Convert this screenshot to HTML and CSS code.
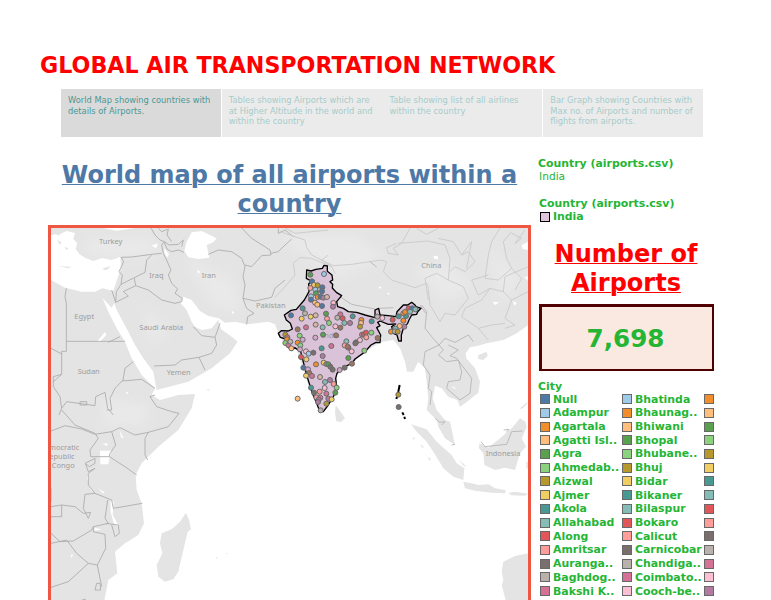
FILE: index.html
```html
<!DOCTYPE html>
<html lang="en">
<head>
<meta charset="utf-8">
<title>Global Air Transportation Network</title>
<link rel="stylesheet" href="styles.css">
</head>
<body>
<h1 class="title">GLOBAL AIR TRANSPORTATION NETWORK</h1>
<nav class="story">
  <div class="tab active">World Map showing countries with details of Airports.</div>
  <div class="tab">Tables showing Airports which are at Higher Altitude in the world and within the country</div>
  <div class="tab joined">Table showing list of all airlines within the country</div>
  <div class="tab">Bar Graph showing Countries with Max no. of Airports and number of flights from airports.</div>
</nav>
<main class="board">
  <section class="map-col">
    <h2 class="map-title">World map of all airports within a country</h2>
    <div class="map">
      <svg width="477" height="376" viewBox="18 9 1431 1128">
        <defs><filter id="soft"><feGaussianBlur stdDeviation="1.6"/></filter><filter id="relief" x="-20%" y="-20%" width="140%" height="140%"><feGaussianBlur stdDeviation="18"/></filter></defs>
        <g class="land" filter="url(#soft)">
          <path d="M18 0H1450V300L1415 325 1375 345 1325 355 1300 362 1275 367 1262 385 1264 400 1290 430 1305 470 1300 503 1266 530 1245 545 1237 525 1210 515 1190 490 1170 482 1163 520 1175 555 1200 585 1215 590 1230 660 1200 640 1180 605 1175 585 1145 555 1150 520 1145 470 1140 430 1120 410 1105 440 1086 440 1080 410 1065 370 1045 345 1005 352 960 382 910 425 875 450 875 490 865 520 830 560 815 530 790 480 770 420 755 375 725 370 700 325 690 298 670 290 605 298 570 290 540 293 522 280 490 273 465 258 440 225 415 215 407 235 425 255 440 290 450 305 470 315 500 310 520 285 528 312 560 335 578 350 555 385 500 430 430 470 335 495 325 440 295 400 270 360 250 320 215 255 208 235 200 248 172 218 190 260 215 310 240 350 260 400 290 450 330 490 320 510 345 525 400 510 450 507 440 550 400 615 340 665 290 715 272 750 275 795 290 835 297 895 280 930 240 955 210 980 217 1045 190 1065 176 1137H18Z"/>
          <path d="M423 863L432 885 438 913 428 920 415 975 400 1040 385 1063 360 1070 340 1055 335 1020 352 985 345 955 350 925 380 913 405 890Z"/>
          <path d="M872 540L890 565 900 580 888 591 874 589 870 565Z"/>
          <path d="M1098 598L1145 613 1175 650 1220 690 1235 715 1258 730 1255 765 1225 755 1195 730 1165 680 1145 650 1115 620Z"/>
          <path d="M1255 770L1280 775 1300 780 1330 778 1350 790 1382 796 1380 805 1340 803 1290 797 1260 790ZM1390 804L1410 800 1450 806 1440 812 1400 811Z"/>
          <path d="M1303 655L1330 668 1365 640 1400 610 1425 580 1441 590 1445 606 1430 640 1443 665 1425 685 1410 735 1380 728 1350 735 1318 720 1315 685 1302 670Z"/>
          <path d="M1450 985L1410 993 1375 1010 1370 1040 1375 1065 1370 1080 1385 1137H1450Z"/>
          <path d="M1300 390L1325 380 1328 392 1315 405 1299 402ZM1107 635L1110 643 1102 643ZM1125 657L1136 665 1132 670ZM1148 695L1158 702 1153 707ZM1240 702L1265 725 1256 723ZM1444 710L1450 712V733L1444 728ZM512 998L518 996V1000L512 1001ZM542 985L548 984V988ZM484 493L496 494 490 497ZM1425 550L1448 530 1446 538 1430 552Z"/>
        </g>
        <g class="relief" filter="url(#relief)"><path d="M120 40H330V95H120ZM420 100L560 160 590 260 500 240ZM700 30H930L1020 100 880 160 750 70ZM1100 130L1220 110 1280 190 1200 230ZM170 520L310 540 300 600 180 600ZM300 240L370 320 310 360ZM1320 60L1430 160 1370 230Z"/></g>
        <g class="sea" filter="url(#soft)">
          <path d="M18 30L50 25 65 18 90 24 85 42 97 55 92 72 104 88 120 98 145 108 172 99 200 105 226 95 228 130 214 170 205 198 172 190 150 200 110 200 60 188 18 165Z"/>
          <path d="M175 9L215 17 270 9ZM425 50L440 22 470 18 495 30 515 40 505 52 485 60 493 98 460 102 430 97 418 78ZM358 70L372 88 366 98 358 84ZM320 62L338 55 334 70ZM455 135L466 140 460 146ZM560 258L568 262 563 267Z"/>
          <path d="M165 677L200 677 195 692 190 718 166 718ZM172 656L188 655 186 663ZM196 827L206 830 203 870 217 895 220 905 206 895 197 860ZM133 745L130 775 145 800 138 795 126 760ZM160 790L180 803 173 805ZM224 617L236 640 228 637ZM148 908L170 913 150 917ZM156 350L180 320 184 330 165 350ZM77 990L83 987 81 1000ZM242 500L251 503 245 508Z"/>
          <path d="M1430 60L1450 50V75L1433 72ZM1165 92L1178 94 1180 103 1168 101ZM1000 184L1010 187 1004 192ZM1026 203L1037 206 1028 209ZM1343 230L1362 232 1350 240ZM1404 227L1416 235 1408 242ZM1221 482L1235 492 1225 490ZM1438 157L1450 153V168Z"/>
        </g>
        <path class="isle" d="M172 131L196 123 190 132 180 136ZM40 124L80 125 70 130ZM36 45L50 52 45 60ZM25 20L50 24 40 32ZM58 65L70 70 65 76Z"/>
        <g class="borders">
          <path d="M228 97L260 96 290 92 320 88 350 85M228 97L236 110 222 140 232 150 228 178M228 178L300 142 305 105 320 90M200 195L212 232 214 200 228 178M212 232L250 213 235 200 272 182 268 160M272 182L310 195 350 225 390 235 410 230 412 220 390 205 398 192 380 175 370 150 378 135 366 108 355 85 350 60 358 50"/>
          <path d="M318 9L330 30 345 45 358 50 372 60 400 58 415 45 410 65M340 10L350 20 370 12 366 30 380 50M358 52L366 72 380 80 400 75 417 82M490 88L520 75 560 80 590 100 600 125 594 155 600 180 594 220 605 250 627 265 608 275 605 298M590 9L620 40 675 75 678 90 650 92 620 125 600 120M594 220L630 228 680 217 690 190 720 165M678 85L700 80 720 60 740 42M700 10V25L720 15 745 35"/>
          <path d="M64 190L60 215 64 235V349H240M64 349V379H50V448L25 455 25 485 45 515 50 550 42 570M18 370L50 387M50 448L25 470M190 352L225 335M445 305L470 332 510 337 525 295M510 337L515 360 500 385 462 397 480 435M462 397L410 405 390 420 327 423M265 410L240 430 234 465M232 468L290 463 330 490M330 510L315 515 335 545 380 560 402 565M234 465L210 490 195 520 200 555 185 555M50 550L65 530 150 542 152 515 180 502 188 550 205 570M105 530H125V540H105Z"/>
          <path d="M50 555L90 600 150 625 160 640 135 675 137 695H193L195 685 212 660 200 620 150 628 110 612 60 602 18 618M200 620L225 608 270 630 310 622 370 605 402 565M310 622L300 640V690L308 705M193 695L240 725 275 750M120 715L150 700V715L133 725ZM122 717L130 740 150 730 130 745 130 780 150 805M150 805L120 808 115 850 130 880 137 862 115 865 90 845 50 840 18 845M18 875H50V840M150 805L200 825 205 850 292 835M188 825L180 880 190 895 145 905V920L180 928 182 970 157 1020 165 1060 170 1085M182 895L220 900 223 925 210 935 200 900M18 925L45 950 85 948 140 915 145 905M18 955L65 945 95 985 130 1015 70 1070 18 1087M130 1015L157 1020M155 1075L165 1075 167 1095 150 1095ZM100 1130L120 1122 130 1137M18 790V830"/>
        </g>
        <g class="borders faint">
          <path d="M705 20L780 45 785 68 800 90 865 122 920 118 1010 105M720 9L750 25 850 15M690 217L720 185 750 150 745 115 765 98 800 100 860 125 870 145M860 125L830 105 850 90"/>
          <path d="M1008 105L1025 110 1015 140 1040 165 1110 188 1145 175 1150 188M1055 55L1025 68 1030 85 1060 90 1045 70 1070 55 1095 10M1060 55L1150 48 1200 60 1215 100 1210 165 1175 145 1140 160 1150 225M1115 10L1145 28 1180 10M1180 40L1225 50 1250 90 1270 80 1290 110 1260 140 1230 125 1215 140M1250 90L1280 50 1265 130M1210 165L1255 185 1270 220 1230 270 1200 265 1185 290 1155 240 1150 190"/>
          <path d="M1365 9L1340 50 1330 90 1320 160 1360 165 1400 130 1385 100 1375 50 1400 20M1330 150L1280 165 1300 210 1335 190 1310 225 1260 250 1250 275 1300 310 1330 345M1335 190L1375 200 1380 155 1450 125M1375 200L1400 225 1380 280 1410 300 1380 310M1400 225L1450 200M1400 130L1430 160 1410 195M1400 25L1430 40 1410 55 1440 15M1300 310L1340 300 1380 295"/>
          <path class="dark" d="M1130 240L1145 260 1140 310 1160 335 1182 360 1200 340 1230 352 1270 330 1285 350M1182 360L1140 380 1135 420 1155 450 1150 490 1160 500 1155 540M1182 360L1195 375 1180 390 1205 410 1240 405 1250 440 1245 465 1210 470 1205 490 1245 525 1275 505 1280 460 1235 400 1215 392 1240 375 1210 360"/>
          <path class="dark" d="M1170 580L1185 592 1200 590 1190 600M1220 660L1230 658M1308 650L1320 665 1385 658 1400 620 1432 618M1376 615L1392 613 1384 622"/>
        </g>
        <g transform="translate(660 90)">
          <path class="himal" d="M220 122L260 148 330 162M345 160L385 158M315 20L335 36M465 150L482 175"/>
          <g class="india">
            <path d="M125 45L138 48 153 43 172 40 177 31 187 33 187 49 201 60 203 75 195 80 203 88 202 99 214 112 230 122 215 140 218 155 235 160 250 170 275 172 300 180 330 188 330 165 341 160 345 180 370 182 393 185 396 170 415 150 428 150 440 142 450 150 453 155 468 160 458 170 455 178 440 180 432 195 428 205 415 220 409 240 409 258 401 258 396 240 385 235 380 215 392 207 370 208 345 198 338 202 345 212 335 218 347 240 345 263 333 262 318 270 298 292 270 312 261 325 237 336 216 355 212 370 216 402 205 425 190 450 175 470 165 470 153 440 142 415 125 360 107 290 99 285 90 278 79 285 60 267 62 252 46 247 40 235 49 227 70 228 82 222 76 205 64 195 58 180 78 166 94 163 118 135 132 110 131 87 138 78 124 70Z"/>
            <path d="M404 390L400 410 397 420M396 425L394 432M412 472L416 480M418 485L420 492"/>
          </g>
        </g>
        <g class="labels">
          <text x="162" y="56">Turkey</text><text x="313" y="158">Iraq</text><text x="470" y="160">Iran</text><text x="633" y="250">Pakistan</text><text x="88" y="283">Egypt</text><text x="283" y="315">Saudi Arabia</text><text x="98" y="447">Sudan</text><text x="365" y="450">Yemen</text><text x="1129" y="128">China</text><text x="1322" y="692">Indonesia</text><text x="830" y="338">India</text><text x="103" y="675" text-anchor="end">Democratic</text><text x="89" y="703" text-anchor="end">Republic</text><text x="89" y="729" text-anchor="end">of Congo</text>
        </g>
        <g id="airports" class="airports" transform="translate(660 90)"></g>
      </svg>
    </div>
  </section>
  <aside class="side">
    <div class="filter"><b>Country (airports.csv)</b><span>India</span></div>
    <div class="key"><b>Country (airports.csv)</b><div class="item"><i class="swatch pink"></i>India</div></div>
    <h2 class="count-title">Number of Airports</h2>
    <div class="count">7,698</div>
    <div class="city">City</div>
    <div class="legend" id="legend"></div>
  </aside>
</main>
<script src="app.js"></script>
</body>
</html>
```
FILE: styles.css
```css
* { box-sizing: border-box; }
html, body { height: 600px; overflow: hidden; }
body { margin: 0; background: #fff; font-family: "DejaVu Sans", sans-serif; display: flex; flex-direction: column; }
.title { margin: 51px 0 0 40px; height: 38px; font-size: 22.18px; line-height: 28px; color: #f00; white-space: nowrap; }
.story { display: flex; gap: 1px; margin-left: 61px; width: 642px; height: 48px; flex: none; }
.tab { width: 160px; padding: 6px 5px 0 7px; background: #ebebeb; color: #a5cbca; font-size: 8.3px; line-height: 10.5px; }
.tab.active { background: #dadada; color: #499894; }
.tab.joined { margin-left: -1px; width: 161px; padding-left: 8px; }
.board { display: flex; margin-left: 48px; flex: 1; min-height: 0; }
.map-col { width: 483px; }
h2 { font-size: 24px; line-height: 29px; text-align: center; text-decoration: underline; text-decoration-thickness: 1px; }
.map-title { margin: 24px 0 6px; color: #4e79a7; }
.map { width: 483px; height: 382px; border: 3px solid #f05742; background: #fff; }
.map svg { display: block; }
.land { fill: #e4e4e4; }
.relief { fill: #ededed; opacity: .6; }
.sea { fill: #fff; }
.isle { fill: #e4e4e4; }
.borders { fill: none; stroke: #acacac; stroke-width: 2.6; stroke-linejoin: round; }
.faint { stroke: #c9c9c9; }
.faint .dark { stroke: #b4b4b4; }
.himal { fill: none; stroke: #bbb; stroke-width: 3; }
.india { fill: #dac3d8; stroke: #000; stroke-width: 4; stroke-linejoin: round; }
.india path + path { fill: none; stroke-width: 6; }
.labels { font-family: "Noto Sans", sans-serif; font-size: 22.4px; fill: #9c9c9c; }
.airports { stroke: #6b6b6b; stroke-width: 3; }
.side { width: 176px; margin-left: 7px; color: #24b534; font-size: 10.9px; }
.filter, .key { display: flex; flex-direction: column; line-height: 13px; white-space: nowrap; }
.filter { margin-top: 20px; height: 40px; }
.filter span { margin-left: 1px; font-size: 10.67px; }
.key { height: 27px; }
.key b { margin-left: 1px; }
.item { display: flex; align-items: center; font-weight: bold; white-space: nowrap; }
.swatch { flex: none; width: 10px; height: 10px; margin: 0 3px 0 2px; border: 1px solid #686868; }
.swatch.pink { background: #dfc5dc; border-color: #000; }
.count-title { margin: 16px 0 6px; color: #f00; }
.count { width: 175px; height: 67px; margin-left: 1px; padding-right: 3px; border: 2px solid #500000; border-top-width: 3px; border-left-width: 3px; background: #fae9e0; font-size: 24.6px; font-weight: bold; line-height: 63px; text-align: center; }
.city { margin: 9px 0 0; font-weight: bold; line-height: 13px; }
.legend { display: grid; grid-template-columns: 82px 82px 12px; grid-auto-rows: 13.72px; margin-top: -0.8px; }
```
FILE: app.js
```js
const palette = ['#4e79a7','#a0cbe8','#f28e2b','#ffbe7d','#59a14f','#8cd17d','#b6992d','#f1ce63','#499894','#86bcb6','#e15759','#ff9d9a','#79706e','#bab0ac','#d37295','#fabfd2','#b07aa1','#d4a6c8','#9d7660','#d7b5a6'];

// Each row: first-column city, second-column city
const rows = [['Null','Bhatinda'],['Adampur','Bhaunag..'],['Agartala','Bhiwani'],['Agatti Isl..','Bhopal'],['Agra','Bhubane..'],['Ahmedab..','Bhuj'],['Aizwal','Bidar'],['Ajmer','Bikaner'],['Akola','Bilaspur'],['Allahabad','Bokaro'],['Along','Calicut'],['Amritsar','Carnicobar'],['Auranga..','Chandiga..'],['Baghdog..','Coimbato..'],['Bakshi K..','Cooch-be..'],['Bangalore','Cuddapah']];
const legend = document.getElementById('legend');
rows.forEach((row, r) => [row[0], row[1], ''].forEach((name, c) => {
  const item = document.createElement('div');
  const swatch = document.createElement('i');
  item.className = 'item';
  swatch.className = 'swatch';
  swatch.style.background = palette[(r + c) % 20];
  item.append(swatch, name);
  legend.append(item);
}));

// Airports as x, y, palette index
const airports = [[136,59,4],[177,57,1],[141,79,0],[147,90,7],[158,91,6],[136,99,11],[151,104,1],[165,103,13],[172,97,0],[171,109,0],[153,115,4],[138,124,1],[158,126,2],[167,125,0],[175,128,16],[186,126,19],[138,134,0],[150,143,3],[157,149,3],[171,153,0],[205,144,15],[204,155,16],[113,160,8],[120,175,13],[78,181,0],[110,191,7],[137,185,7],[152,181,19],[183,176,4],[186,191,11],[192,204,5],[226,178,14],[217,188,13],[233,190,10],[238,204,9],[263,184,8],[289,195,2],[288,204,3],[285,215,6],[320,199,8],[255,204,16],[98,223,18],[123,217,14],[152,209,19],[173,217,9],[211,214,15],[226,218,18],[151,248,17],[174,239,4],[213,241,18],[104,242,5],[113,254,17],[98,263,2],[106,271,5],[61,239,6],[67,247,14],[66,253,2],[61,264,5],[70,270,14],[76,260,13],[79,280,3],[105,283,17],[123,289,15],[131,296,1],[145,293,12],[108,306,10],[124,313,7],[170,280,8],[199,273,14],[173,303,16],[153,328,2],[176,323,7],[184,327,16],[190,328,4],[196,335,12],[203,344,12],[115,338,0],[129,343,17],[133,354,18],[123,362,7],[141,363,14],[165,366,19],[195,375,16],[180,381,9],[206,387,11],[138,398,8],[179,399,15],[215,398,5],[211,413,4],[147,413,12],[164,410,11],[184,416,14],[154,427,11],[166,428,14],[161,434,16],[159,441,16],[190,431,16],[200,433,7],[184,446,6],[167,466,13],[98,431,3],[224,345,17],[239,338,12],[261,326,18],[250,309,4],[298,287,5],[260,289,15],[250,278,14],[244,259,9],[239,271,11],[248,275,18],[273,262,12],[271,265,12],[285,255,15],[291,239,14],[297,238,18],[303,233,10],[319,233,5],[304,247,11],[338,249,18],[337,185,13],[352,189,15],[383,194,10],[401,184,8],[423,183,8],[415,175,2],[420,171,2],[431,160,10],[442,160,0],[451,163,9],[435,170,9],[415,197,2],[418,215,16],[404,213,3],[391,221,9],[378,230,2],[390,229,13],[398,230,6],[400,419,6],[401,456,12]];
const layer = document.getElementById('airports');
for (const [x, y, color] of airports) {
  const dot = document.createElementNS('http://www.w3.org/2000/svg', 'circle');
  dot.setAttribute('cx', x);
  dot.setAttribute('cy', y);
  dot.setAttribute('r', 7.5);
  dot.setAttribute('fill', palette[color]);
  layer.append(dot);
}
```
